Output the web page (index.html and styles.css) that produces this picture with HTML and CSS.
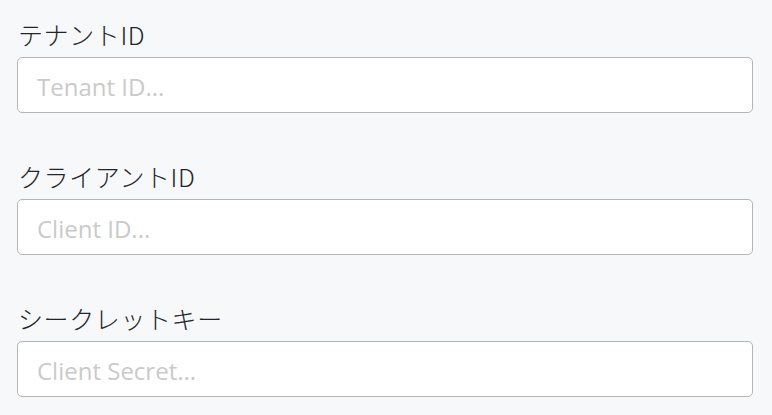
FILE: index.html
```html
<!DOCTYPE html>
<html lang="ja">
<head>
<meta charset="utf-8">
<link rel="stylesheet" href="styles.css">
</head>
<body>
<form class="form">
  <div class="field">
    <label class="label" for="tenant">テナントID</label>
    <input class="input" id="tenant" type="text" placeholder="Tenant ID...">
  </div>
  <div class="field">
    <label class="label" for="client">クライアントID</label>
    <input class="input" id="client" type="text" placeholder="Client ID...">
  </div>
  <div class="field">
    <label class="label" for="secret">シークレットキー</label>
    <input class="input" id="secret" type="text" placeholder="Client Secret...">
  </div>
</form>
</body>
</html>
```
FILE: styles.css
```css
html, body {
  margin: 0;
  padding: 0;
  background: #f7f8fa;
}
.form {
  display: flex;
  flex-direction: column;
  gap: 47px;
  padding: 18px 19px 0 17px;
}
.field {
  display: flex;
  flex-direction: column;
  gap: 6px;
}
.label {
  font-family: "Noto Sans CJK JP", "Noto Sans", sans-serif;
  font-weight: 300;
  font-size: 25px;
  letter-spacing: 0.6px;
  line-height: 33px;
  color: #212529;
  padding-left: 1px;
}
.input {
  box-sizing: border-box;
  height: 56px;
  width: 100%;
  margin: 0;
  border: 1px solid #b5b5b5;
  border-radius: 5px;
  background: #fff;
  padding: 2px 19px 0;
  font-family: "Open Sans", "Noto Sans", sans-serif;
  font-weight: 400;
  font-size: 24px;
  color: #212529;
  outline: none;
}
.input::placeholder {
  color: #cacaca;
}
```
